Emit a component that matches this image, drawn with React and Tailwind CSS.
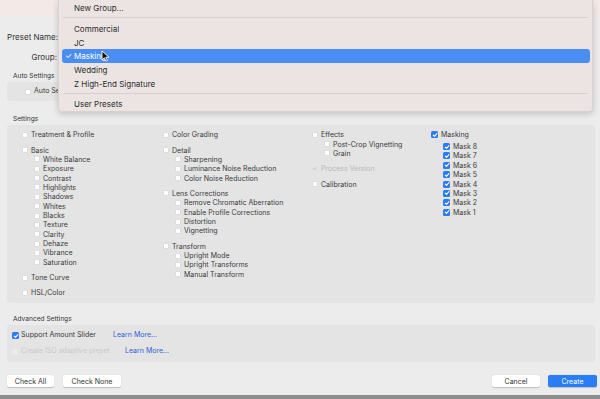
import React from "react";

const font = { fontFamily: "Inter, 'Noto Sans', sans-serif" };

function Check({ checked = false, disabled = false }) {
  if (checked) {
    return (
      <span className="w-[7px] h-[7px] rounded-[1.5px] bg-[#2b7bf3] flex items-center justify-center shrink-0">
        <svg width="6" height="6" viewBox="0 0 10 10">
          <path d="M2 5.2 L4.2 7.4 L8.2 2.6" fill="none" stroke="white" strokeWidth="1.8" strokeLinecap="round" strokeLinejoin="round" />
        </svg>
      </span>
    );
  }
  return (
    <span
      className={
        "w-[6px] h-[6px] rounded-[1px] shrink-0 " +
        (disabled ? "bg-[#ededed] border border-[#e6e6e6]" : "bg-white border border-[#dcdcdc]")
      }
    />
  );
}

function Row({ label, checked, sub, disabled, processed }) {
  return (
    <div className={"h-[9.36px] flex items-center " + (sub ? "pl-[12px]" : "")}>
      {processed ? (
        <span className="w-[6px] text-[#b8b8b8] text-[6px] leading-none shrink-0">✓</span>
      ) : (
        <Check checked={checked} disabled={disabled} />
      )}
      <span
        className={
          "ml-[3px] text-[7px] leading-none whitespace-nowrap " +
          (processed || disabled ? "text-[#b9b9b9]" : "text-[#3a3a3a]")
        }
      >
        {label}
      </span>
    </div>
  );
}

function Group({ first, label, checked, items = [], subChecked, extraGap }) {
  return (
    <div className={first ? "" : "mt-[6px]"}>
      <Row label={label} checked={checked} />
      {extraGap ? <div className="h-[2.6px]" /> : null}
      {items.map((it) => (
        <Row key={it} label={it} sub checked={subChecked} />
      ))}
    </div>
  );
}

export default function App() {
  return (
    <div className="w-[600px] h-[399px] relative overflow-hidden bg-[#ececec] flex flex-col" style={font}>
      <div className="h-[16px] bg-[#f3eae8] shrink-0" />
      {/* Preset name */}
      <div className="mt-[15px] h-[12px] flex items-center shrink-0">
        <div className="w-[58px] text-right text-[8px] text-[#333]">Preset Name:</div>
      </div>
      <div className="mt-[8px] h-[12px] flex items-center shrink-0">
        <div className="w-[57px] text-right text-[8px] text-[#333]">Group:</div>
      </div>
      <div className="mt-[9px] h-[10px] flex items-center pl-[13px] shrink-0">
        <span className="text-[6.6px] text-[#333]">Auto Settings</span>
      </div>
      <div className="h-[19px] mx-[7px] bg-[#e4e4e4] rounded-[3px] flex items-center pl-[18px] shrink-0">
        <Check />
        <span className="ml-[3px] text-[7px] text-[#3a3a3a]">Auto Settings</span>
      </div>
      <div className="mt-[14px] h-[10px] flex items-center pl-[13px] shrink-0">
        <span className="text-[6.6px] text-[#333]">Settings</span>
      </div>
      <div className="h-[178px] mx-[7px] mr-[5px] bg-[#e4e4e4] rounded-[3px] flex pt-[5px] pl-[15px] shrink-0">
        <div className="w-[141px] flex flex-col">
          <Group first label="Treatment & Profile" />
          <Group
            label="Basic"
            items={["White Balance", "Exposure", "Contrast", "Highlights", "Shadows", "Whites", "Blacks", "Texture", "Clarity", "Dehaze", "Vibrance", "Saturation"]}
          />
          <Group label="Tone Curve" />
          <div className="mt-[5.6px]">
            <Row label="HSL/Color" />
          </div>
        </div>
        <div className="w-[149px] flex flex-col">
          <Group first label="Color Grading" />
          <Group label="Detail" items={["Sharpening", "Luminance Noise Reduction", "Color Noise Reduction"]} />
          <Group label="Lens Corrections" items={["Remove Chromatic Aberration", "Enable Profile Corrections", "Distortion", "Vignetting"]} />
          <Group label="Transform" items={["Upright Mode", "Upright Transforms", "Manual Transform"]} />
        </div>
        <div className="w-[119px] flex flex-col">
          <Group first label="Effects" items={["Post-Crop Vignetting", "Grain"]} />
          <div className="mt-[6px]">
            <Row label="Process Version" processed />
          </div>
          <div className="mt-[6px]">
            <Row label="Calibration" />
          </div>
        </div>
        <div className="flex flex-col">
          <Group
            first
            label="Masking"
            checked
            subChecked
            extraGap
            items={["Mask 8", "Mask 7", "Mask 6", "Mask 5", "Mask 4", "Mask 3", "Mask 2", "Mask 1"]}
          />
        </div>
      </div>
      <div className="mt-[12px] h-[10px] flex items-center pl-[13px] shrink-0">
        <span className="text-[6.6px] text-[#333]">Advanced Settings</span>
      </div>
      <div className="h-[37px] mx-[7px] mr-[5px] bg-[#e4e4e4] rounded-[3px] flex flex-col pt-[5.5px] pl-[5px] shrink-0">
        <div className="h-[10px] flex items-center">
          <Check checked />
          <span className="ml-[2px] w-[92px] text-[7px] text-[#3a3a3a] whitespace-nowrap">Support Amount Slider</span>
          <span className="text-[7px] text-[#2d5fd8]">Learn More...</span>
        </div>
        <div className="mt-[6px] h-[10px] flex items-center">
          <Check disabled />
          <span className="ml-[3px] w-[104px] text-[7px] text-[#c9c9c9] whitespace-nowrap">Create ISO adaptive preset</span>
          <span className="text-[7px] text-[#2d5fd8]">Learn More...</span>
        </div>
      </div>
      <div className="mt-[13px] h-[12px] flex items-center px-[7px] pr-[3px] shrink-0">
        <button className="w-[47px] h-[12px] bg-white rounded-[2px] shadow-[0_0.5px_1px_rgba(0,0,0,0.2)] text-[7px] text-[#333] leading-none">Check All</button>
        <button className="ml-[9px] w-[58px] h-[12px] bg-white rounded-[2px] shadow-[0_0.5px_1px_rgba(0,0,0,0.2)] text-[7px] text-[#333] leading-none">Check None</button>
        <div className="flex-1" />
        <button className="w-[48px] h-[12px] bg-white rounded-[2px] shadow-[0_0.5px_1px_rgba(0,0,0,0.2)] text-[7px] text-[#333] leading-none">Cancel</button>
        <button className="ml-[8px] w-[49px] h-[12px] bg-[#2a7ef5] rounded-[2px] shadow-[0_0.5px_1px_rgba(0,0,0,0.2)] text-[7px] text-white leading-none">Create</button>
      </div>
      <div className="flex-1" />
      <div className="h-[4px] bg-[#8e8e8e] shrink-0" />

      {/* Dropdown menu */}
      <div className="absolute left-[58px] top-0 w-[535px] h-[112px] bg-[#ebe4e3] rounded-b-[4px] shadow-[0_2px_6px_rgba(0,0,0,0.18)] border-x border-b border-[#d9d2d1] pt-[1px] text-[8px] text-[#2c2c2c]">
        <div className="h-[14px] flex items-center pl-[15px]">New Group...</div>
        <div className="h-[7px] flex items-start pt-[2px] px-[4px]">
          <div className="w-full h-px bg-[#d8d0cf]" />
        </div>
        <div className="h-[13.7px] flex items-center pl-[15px]">Commercial</div>
        <div className="h-[13.7px] flex items-center pl-[15px]">JC</div>
        <div className="h-[13.7px] flex items-center mx-[3px] mr-[2px] bg-[#4a8ef3] rounded-[3px] text-white">
          <span className="w-[12px] pl-[3px] text-[8px]">✓</span>
          <span>Masking</span>
        </div>
        <div className="h-[13.7px] flex items-center pl-[15px]">Wedding</div>
        <div className="h-[13.7px] flex items-center pl-[15px]">Z High-End Signature</div>
        <div className="h-[7px] flex items-center px-[4px]">
          <div className="w-full h-px bg-[#d8d0cf]" />
        </div>
        <div className="h-[13.7px] flex items-center pl-[15px]">User Presets</div>
      </div>
      {/* cursor */}
      <svg className="absolute left-[101px] top-[50px]" width="9" height="12" viewBox="0 0 9 12">
        <path d="M1 1 L1 10 L3.3 7.8 L5 11.2 L6.4 10.5 L4.8 7.2 L8 7.2 Z" fill="#111" stroke="white" strokeWidth="0.9" strokeLinejoin="round" />
      </svg>
    </div>
  );
}
